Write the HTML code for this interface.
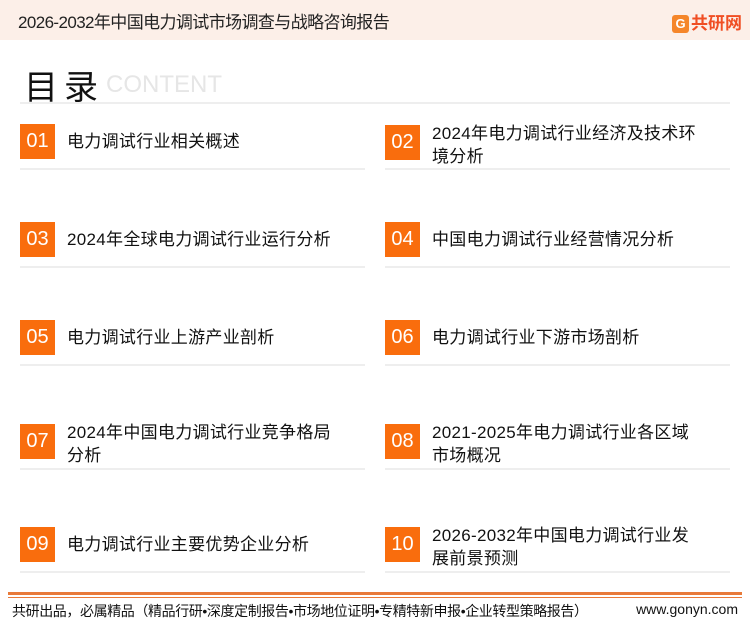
<!DOCTYPE html>
<html><head><meta charset="utf-8"><style>
*{margin:0;padding:0;box-sizing:border-box}
body{width:750px;height:622px;background:#fff;position:relative;overflow:hidden;font-family:"Liberation Sans","Noto Sans CJK SC",sans-serif;color:#111}
.hdr{position:absolute;left:0;top:0;width:750px;height:40px;background:#fcefe8}
.hdr .t{position:absolute;left:18px;top:8px;font-size:17px;color:#222;letter-spacing:-0.6px}
.logo{position:absolute;right:8px;top:9px;font-size:17px;font-weight:bold;color:#f04e23}
.logo b{display:inline-block;width:17px;height:18px;background:#f5862a;border-radius:3px;color:#fff;font-size:13px;text-align:center;line-height:18px;margin-right:2px;vertical-align:1px}
.ttl{position:absolute;left:24px;top:60px;font-size:34px;letter-spacing:6px}
.en{position:absolute;left:106px;top:71px;font-size:24px;color:#e6e6e6}
.hl{position:absolute;left:20px;top:102px;width:710px;height:2px;background:#eee}
.it{position:absolute;width:345px;height:35px}
.box{position:absolute;left:0;top:0;width:35px;height:35px;background:#f96d0d;color:#fff;font-size:20px;text-align:center;line-height:35px}
.tx{position:absolute;left:47px;font-size:17px;line-height:23px;width:300px;white-space:nowrap;letter-spacing:0.3px}
.sep{position:absolute;height:2px;width:345px;background:#eee}
.ol{position:absolute;left:8px;top:592px;width:734px;height:3px;background:#e87a3a}
.ol2{position:absolute;left:8px;top:597px;width:734px;height:1px;background:#e87a3a}
.ft{position:absolute;left:12px;top:601px;font-size:14px;color:#111;letter-spacing:-0.4px}
.fr{position:absolute;right:12px;top:601px;font-size:14px}
</style></head><body>
<div class="hdr"><div class="t">2026-2032年中国电力调试市场调查与战略咨询报告</div><div class="logo"><b>G</b>共研网</div></div>
<div class="ttl">目录</div><div class="en">CONTENT</div>
<div class="hl"></div>

<div class="it" style="left:20px;top:124px"><div class="box">01</div><div class="tx" style="top:6px">电力调试行业相关概述</div></div>
<div class="it" style="left:385px;top:125px"><div class="box">02</div><div class="tx" style="top:-3px">2024年电力调试行业经济及技术环<br>境分析</div></div>
<div class="sep" style="left:20px;top:168px"></div><div class="sep" style="left:385px;top:168px"></div>

<div class="it" style="left:20px;top:222px"><div class="box">03</div><div class="tx" style="top:6px">2024年全球电力调试行业运行分析</div></div>
<div class="it" style="left:385px;top:222px"><div class="box">04</div><div class="tx" style="top:6px">中国电力调试行业经营情况分析</div></div>
<div class="sep" style="left:20px;top:266px"></div><div class="sep" style="left:385px;top:266px"></div>

<div class="it" style="left:20px;top:320px"><div class="box">05</div><div class="tx" style="top:6px">电力调试行业上游产业剖析</div></div>
<div class="it" style="left:385px;top:320px"><div class="box">06</div><div class="tx" style="top:6px">电力调试行业下游市场剖析</div></div>
<div class="sep" style="left:20px;top:364px"></div><div class="sep" style="left:385px;top:364px"></div>

<div class="it" style="left:20px;top:424px"><div class="box">07</div><div class="tx" style="top:-3px">2024年中国电力调试行业竞争格局<br>分析</div></div>
<div class="it" style="left:385px;top:424px"><div class="box">08</div><div class="tx" style="top:-3px">2021-2025年电力调试行业各区域<br>市场概况</div></div>
<div class="sep" style="left:20px;top:468px"></div><div class="sep" style="left:385px;top:468px"></div>

<div class="it" style="left:20px;top:527px"><div class="box">09</div><div class="tx" style="top:6px">电力调试行业主要优势企业分析</div></div>
<div class="it" style="left:385px;top:527px"><div class="box">10</div><div class="tx" style="top:-3px">2026-2032年中国电力调试行业发<br>展前景预测</div></div>
<div class="sep" style="left:20px;top:571px"></div><div class="sep" style="left:385px;top:571px"></div>

<div class="ol"></div><div class="ol2"></div>
<div class="ft">共研出品，必属精品（精品行研•深度定制报告•市场地位证明•专精特新申报•企业转型策略报告）</div>
<div class="fr">www.gonyn.com</div>
</body></html>
